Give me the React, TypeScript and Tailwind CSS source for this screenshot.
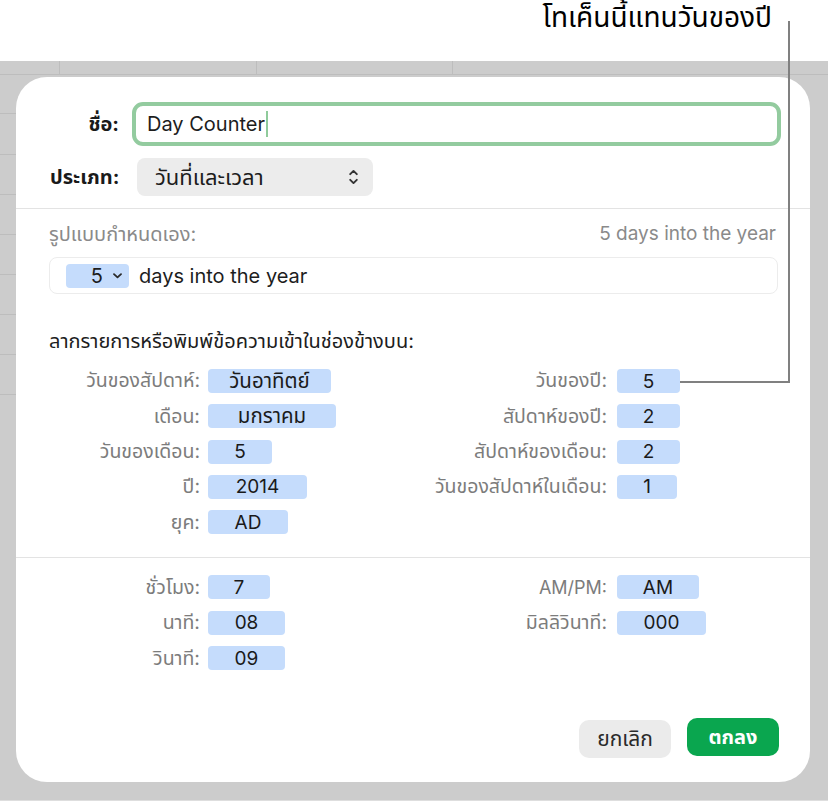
import React from "react";

const FONT = 'Inter, "Noto Sans Thai", "Noto Sans Thai UI", "Noto Sans", "DejaVu Sans", sans-serif';

function Token({ text, w, size }: { text: string; w: number; size: number }) {
  return (
    <div
      className="h-[24px] rounded-[4px] bg-[#c5dcfc] flex items-center justify-center text-[#1a1a1a] leading-none"
      style={{ width: w, fontSize: size }}
    >
      {text}
    </div>
  );
}

type Row = { label: string; token: string; w: number; labelSize?: number; tokenSize?: number };

function FieldRow({ row, labelW, gap }: { row: Row; labelW: number; gap: number }) {
  return (
    <div className="flex items-center h-[24px]">
      <div
        className="text-right text-[#7c7c7c] whitespace-nowrap"
        style={{ width: labelW, marginRight: gap, fontSize: row.labelSize ?? 19.5 }}
      >
        {row.label}
      </div>
      <Token text={row.token} w={row.w} size={row.tokenSize ?? 19} />
    </div>
  );
}

function UpDown() {
  return (
    <svg width="9" height="16" viewBox="0 0 9 16" fill="none" stroke="#333" strokeWidth="1.9" strokeLinecap="round" strokeLinejoin="round">
      <path d="M1.2 5.2 L4.5 1.9 L7.8 5.2" />
      <path d="M1.2 10.8 L4.5 14.1 L7.8 10.8" />
    </svg>
  );
}

function SmallChevron() {
  return (
    <svg width="9" height="6" viewBox="0 0 9 6" fill="none" stroke="#2a2a2a" strokeWidth="1.8" strokeLinecap="round" strokeLinejoin="round">
      <path d="M1 1.2 L4.5 4.4 L8 1.2" />
    </svg>
  );
}

export default function App() {
  const dateLeft: Row[] = [
    { label: "วันของสัปดาห์:", token: "วันอาทิตย์", w: 123, tokenSize: 20.5 },
    { label: "เดือน:", token: "มกราคม", w: 128, tokenSize: 20.5 },
    { label: "วันของเดือน:", token: "5", w: 64 },
    { label: "ปี:", token: "2014", w: 99 },
    { label: "ยุค:", token: "AD", w: 80 },
  ];
  const dateRight: Row[] = [
    { label: "วันของปี:", token: "5", w: 63 },
    { label: "สัปดาห์ของปี:", token: "2", w: 63 },
    { label: "สัปดาห์ของเดือน:", token: "2", w: 63 },
    { label: "วันของสัปดาห์ในเดือน:", token: "1", w: 60 },
  ];
  const timeLeft: Row[] = [
    { label: "ชั่วโมง:", token: "7", w: 62 },
    { label: "นาที:", token: "08", w: 77 },
    { label: "วินาที:", token: "09", w: 77 },
  ];
  const timeRight: Row[] = [
    { label: "AM/PM:", token: "AM", w: 82, labelSize: 18 },
    { label: "มิลลิวินาที:", token: "000", w: 89 },
  ];

  return (
    <div className="relative w-[828px] h-[801px] bg-white overflow-hidden" style={{ fontFamily: FONT }}>
      {/* caption above the sheet */}
      <div className="h-[61px] flex justify-end pr-[56px]">
        <span className="text-[28px] leading-[34px] text-black">โทเค็นนี้แทนวันของปี</span>
      </div>

      {/* spreadsheet behind the dialog */}
      <div className="h-[739px] bg-[#cccccc] flex flex-col">
        <div className="h-[14px] flex border-b border-[#bdbdbd]">
          <div className="w-[60px] border-r border-[#bdbdbd]" />
          <div className="w-[197px] border-r border-[#bdbdbd]" />
          <div className="w-[196px] border-r border-[#bdbdbd]" />
        </div>
        <div className="flex flex-1">
          <div className="w-[16px] flex flex-col">
            <div className="h-[39px] border-b border-[#bdbdbd]" />
            <div className="h-[41px] border-b border-[#bdbdbd]" />
            <div className="h-[40px] border-b border-[#bdbdbd]" />
            <div className="h-[40px] border-b border-[#bdbdbd]" />
            <div className="h-[40px] border-b border-[#bdbdbd]" />
            <div className="h-[40px] border-b border-[#bdbdbd]" />
            <div className="h-[40px] border-b border-[#bdbdbd]" />
            <div className="h-[40px] border-b border-[#bdbdbd]" />
          </div>

          {/* dialog */}
          <div className="mt-[2px] w-[794px] h-[705px] bg-white rounded-[31px] flex flex-col">
            <div className="pt-[25px] pl-[34px] pr-[29px] flex flex-col">
              <div className="flex items-center h-[44px]">
                <div className="w-[69px] text-right text-[20px] font-bold text-[#1a1a1a]">ชื่อ:</div>
                <div className="ml-[13px] flex-1 h-[44px] rounded-[11px] border-[4px] border-[#93cb9f] flex items-center pl-[11px]">
                  <span className="text-[20px] text-[#1d1d1d]">Day Counter</span>
                  <span className="ml-[1px] w-[2px] h-[26px] bg-[#8fcb9b]" />
                </div>
              </div>
              <div className="flex items-center h-[38px] mt-[12px]">
                <div className="w-[69px] text-right text-[20px] font-bold text-[#1a1a1a]">ประเภท:</div>
                <div className="ml-[18px] w-[236px] h-[38px] rounded-[8px] bg-[#ececec] flex items-center justify-between pl-[18px] pr-[15px]">
                  <span className="text-[22px] text-[#1d1d1d]">วันที่และเวลา</span>
                  <UpDown />
                </div>
              </div>
            </div>

            <div className="mt-[12px] h-[1px] bg-[#e3e3e3]" />

            <div className="pl-[33px] pr-[32px] flex flex-col">
              <div className="mt-[13px] h-[24px] flex items-center justify-between text-[#8a8a8a]">
                <span className="text-[20px]">รูปแบบกำหนดเอง:</span>
                <span className="mr-[2px] text-[19px]">5 days into the year</span>
              </div>
              <div className="mt-[11px] h-[37px] rounded-[8px] border border-[#ececec] flex items-center pl-[16px]">
                <div className="w-[63px] h-[24px] rounded-[4px] bg-[#c5dcfc] flex items-center justify-end pr-[7px] gap-[10px]">
                  <span className="text-[20px] text-[#1d1d1d] leading-none">5</span>
                  <SmallChevron />
                </div>
                <span className="ml-[10px] text-[20px] text-[#1d1d1d]">days into the year</span>
              </div>
              <div className="mt-[35px] h-[24px] flex items-center text-[20px] text-[#1d1d1d] whitespace-nowrap">
                ลากรายการหรือพิมพ์ข้อความเข้าในช่องข้างบน:
              </div>
            </div>

            <div className="mt-[16px] flex pl-[34px]">
              <div className="w-[370px] flex flex-col gap-[11.3px]">
                {dateLeft.map((r) => (
                  <FieldRow key={r.label} row={r} labelW={150} gap={8} />
                ))}
              </div>
              <div className="flex flex-col gap-[11.3px]">
                {dateRight.map((r) => (
                  <FieldRow key={r.label} row={r} labelW={187} gap={10} />
                ))}
              </div>
            </div>

            <div className="mt-[23px] h-[1px] bg-[#e3e3e3]" />

            <div className="mt-[17px] flex pl-[34px]">
              <div className="w-[370px] flex flex-col gap-[11.5px]">
                {timeLeft.map((r) => (
                  <FieldRow key={r.label} row={r} labelW={150} gap={8} />
                ))}
              </div>
              <div className="flex flex-col gap-[11.5px]">
                {timeRight.map((r) => (
                  <FieldRow key={r.label} row={r} labelW={187} gap={10} />
                ))}
              </div>
            </div>

            <div className="mt-auto pb-[24px] pr-[31px] flex justify-end gap-[16px]">
              <button className="w-[92px] h-[38px] mt-[2px] rounded-[10px] bg-[#ebebeb] text-[21px] text-[#2a2a2a]">ยกเลิก</button>
              <button className="w-[92px] h-[38px] rounded-[10px] bg-[#0aa64f] text-[20px] font-bold text-white">ตกลง</button>
            </div>
          </div>
        </div>
      </div>
      <div className="h-[1px] bg-[#dedede]" />

      {/* leader line from caption to token */}
      <svg className="absolute left-0 top-0 pointer-events-none" width="828" height="801">
        <path d="M789 21 V382 H680" fill="none" stroke="#808080" strokeWidth="2" />
      </svg>
    </div>
  );
}
